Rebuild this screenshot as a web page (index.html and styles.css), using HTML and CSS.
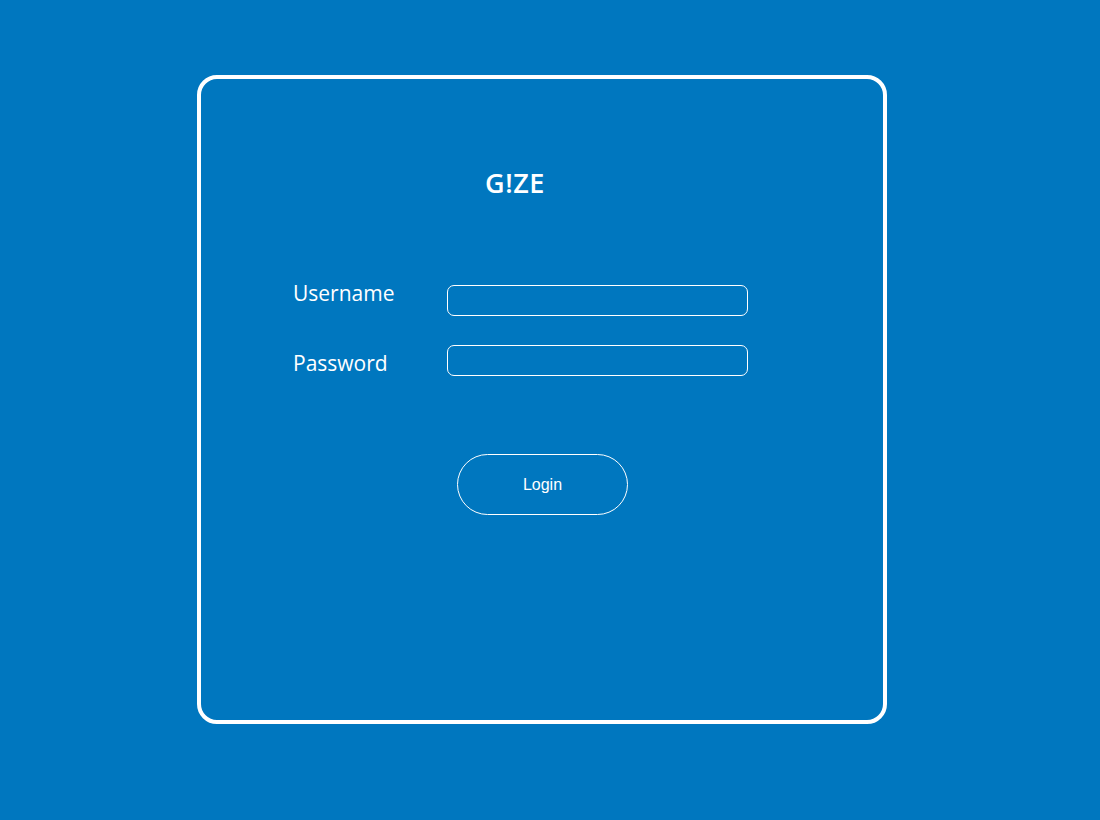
FILE: index.html
```html
<!DOCTYPE html>
<html lang="en">
<head>
<meta charset="utf-8">
<title>G!ZE Login</title>
<link rel="stylesheet" href="styles.css">
</head>
<body>
<div class="card">
  <h1 class="title">G!ZE</h1>
  <form class="form">
    <div class="row">
      <label class="label" for="u">Username</label>
      <input class="field" id="u" type="text">
    </div>
    <div class="row row-pw">
      <label class="label" for="p">Password</label>
      <input class="field" id="p" type="password">
    </div>
    <div class="actions">
      <button class="login" type="button">Login</button>
    </div>
  </form>
</div>
</body>
</html>
```

FILE: styles.css
```css
html, body {
  margin: 0;
  padding: 0;
  background: #0077bf;
  height: 100%;
}
body {
  padding-top: 75px;
  box-sizing: border-box;
  font-family: "Open Sans", "Noto Sans", sans-serif;
  color: #fff;
}
.card {
  margin-left: 197px;
  width: 690px;
  height: 649px;
  box-sizing: border-box;
  border: 4px solid #fff;
  border-radius: 20px;
  padding-top: 84px;
}
.title {
  margin: 0 0 0 284px;
  font-size: 27px;
  font-weight: 600;
  line-height: 40px;
  letter-spacing: 0.6px;
}
.form {
  margin: 82px 0 0 92px;
}
.row {
  display: flex;
  align-items: flex-start;
}
.row-pw {
  margin-top: 29px;
}
.label {
  width: 154px;
  font-size: 21px;
  line-height: 28px;
  margin-top: -6px;
}
.row-pw .label {
  margin-top: 4px;
}
.field {
  width: 301px;
  height: 31px;
  box-sizing: border-box;
  border: 1px solid #fff;
  border-radius: 7px;
  background: transparent;
  color: #fff;
  padding: 0 8px;
  margin: 0;
  outline: none;
}
.actions {
  margin-top: 77px;
  padding-left: 164px;
}
.login {
  width: 171px;
  height: 61px;
  box-sizing: border-box;
  border: 1px solid #fff;
  border-radius: 31px;
  background: transparent;
  color: #fff;
  font-family: "Liberation Sans", Arial, sans-serif;
  font-size: 16px;
  padding: 0;
}
```
